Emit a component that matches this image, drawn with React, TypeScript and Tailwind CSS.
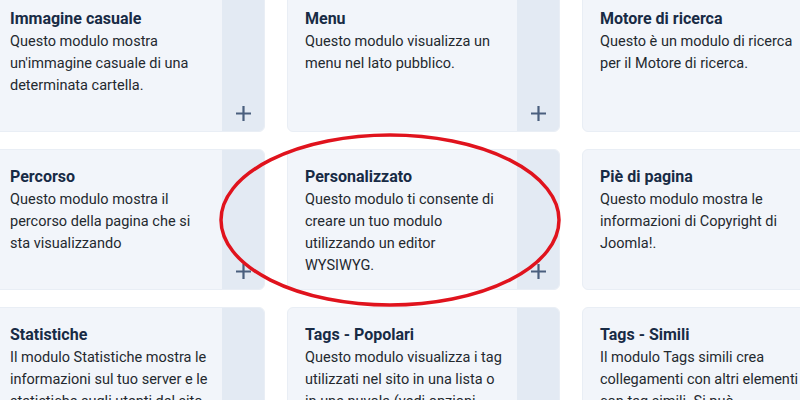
import React from 'react';

type Mod = { title: string; lines: string[] };

// righe spezzate come nello screenshot
const modules: Mod[] = [
  { title: 'Immagine casuale', lines: ['Questo modulo mostra', "un'immagine casuale di una", 'determinata cartella.'] },
  { title: 'Menu', lines: ['Questo modulo visualizza un', 'menu nel lato pubblico.'] },
  { title: 'Motore di ricerca', lines: ['Questo è un modulo di ricerca', 'per il Motore di ricerca.'] },
  { title: 'Percorso', lines: ['Questo modulo mostra il', 'percorso della pagina che si', 'sta visualizzando'] },
  { title: 'Personalizzato', lines: ['Questo modulo ti consente di', 'creare un tuo modulo', 'utilizzando un editor', 'WYSIWYG.'] },
  { title: 'Piè di pagina', lines: ['Questo modulo mostra le', 'informazioni di Copyright di', 'Joomla!.'] },
  { title: 'Statistiche', lines: ['Il modulo Statistiche mostra le', 'informazioni sul tuo server e le', 'statistiche sugli utenti del sito.'] },
  { title: 'Tags - Popolari', lines: ['Questo modulo visualizza i tag', 'utilizzati nel sito in una lista o', 'in una nuvola (vedi opzioni', 'modulo).'] },
  { title: 'Tags - Simili', lines: ['Il modulo Tags simili crea', 'collegamenti con altri elementi', 'con tag simili. Si può', 'scegliere il numero.'] },
];

function PlusIcon() {
  return (
    <svg width="17" height="17" viewBox="0 0 17 17" fill="none" className="text-[#4a5f7e]">
      <path d="M8.5 1v15M1 8.5h15" stroke="currentColor" strokeWidth="2.2" />
    </svg>
  );
}

function ModuleCard({ mod }: { mod: Mod }) {
  return (
    <div className="flex h-[141px] overflow-hidden rounded-[6px] border border-[#e9eef5] bg-[#f2f5fa]">
      <div className="min-w-0 flex-1 pl-[17px] pr-[6px] pt-[16px]">
        <h3 className="whitespace-nowrap text-[16px] font-bold leading-[22px] text-[#182b45]">{mod.title}</h3>
        <p className="mt-px text-[14.5px] leading-[22px] text-[#24292f]">
          {mod.lines.map((l, i) => (
            <span key={i} className="block whitespace-nowrap">
              {l}
            </span>
          ))}
        </p>
      </div>
      <div className="flex w-[42px] shrink-0 items-end justify-center bg-[#e3eaf3] pb-[9px]">
        <PlusIcon />
      </div>
    </div>
  );
}

export default function App() {
  return (
    <div className="relative h-[400px] w-[800px] overflow-hidden bg-white font-['Roboto',sans-serif]">
      <div className="ml-[-8px] mt-[-9px] grid grid-cols-[273px_273px_273px] gap-x-[22px] gap-y-[17px]">
        {modules.map((m) => (
          <ModuleCard key={m.title} mod={m} />
        ))}
      </div>
      <svg className="pointer-events-none absolute left-0 top-0" width="800" height="400" viewBox="0 0 800 400">
        <ellipse cx="390" cy="220" rx="169" ry="85" fill="none" stroke="#e0131d" strokeWidth="3.5" />
      </svg>
    </div>
  );
}
